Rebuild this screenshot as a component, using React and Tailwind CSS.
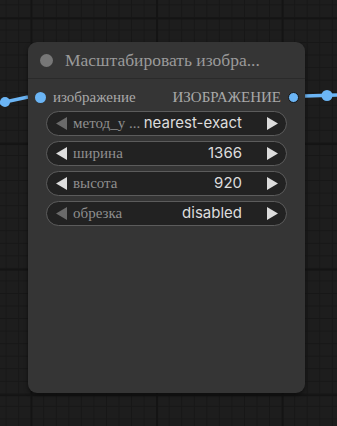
import React from 'react';

const widgets = [
  { label: 'метод_у ...', value: 'nearest-exact', dimLeft: true },
  { label: 'ширина', value: '1366', dimLeft: false },
  { label: 'высота', value: '920', dimLeft: false },
  { label: 'обрезка', value: 'disabled', dimLeft: true },
];

function Arrow({ dir, dim }) {
  const fill = dim ? '#6a6a6a' : '#dddddd';
  return (
    <svg width="11" height="13" viewBox="0 0 11 13" className="shrink-0">
      {dir === 'left' ? (
        <polygon points="11,0 11,13 0,6.5" fill={fill} />
      ) : (
        <polygon points="0,0 0,13 11,6.5" fill={fill} />
      )}
    </svg>
  );
}

function Widget({ label, value, dimLeft }) {
  return (
    <div className="flex items-center h-[25px] rounded-full border border-[#5c5c5c] bg-[#222222] pl-[9px] pr-[8px]">
      <Arrow dir="left" dim={dimLeft} />
      <span className="ml-[6px] text-[15px] text-[#8f8f8f] font-['Liberation_Serif',serif] whitespace-nowrap">{label}</span>
      <span className="ml-auto mr-[25px] text-[15px] text-[#dddddd] font-['Inter',sans-serif] whitespace-nowrap">{value}</span>
      <Arrow dir="right" />
    </div>
  );
}

export default function App() {
  return (
    <div className="relative w-[337px] h-[426px] overflow-hidden bg-[#1d1d1d] bg-[image:linear-gradient(to_right,#141414_1.5px,transparent_1.5px),linear-gradient(to_bottom,#141414_1.5px,transparent_1.5px),linear-gradient(to_right,#171717_1px,transparent_1px),linear-gradient(to_bottom,#171717_1px,transparent_1px)] bg-[size:125.6px_125.6px,125.6px_125.6px,12.56px_12.56px,12.56px_12.56px] bg-[position:30.5px_17.5px,30.5px_17.5px,5.6px_4.4px,5.6px_4.4px]">
      {/* wires */}
      <svg className="absolute inset-0" width="337" height="426">
        <path d="M0 103 L28 97" stroke="#6bb5f5" strokeWidth="3.5" fill="none" />
        <circle cx="5" cy="102" r="5" fill="#6bb5f5" />
        <path d="M305 96 L337 95" stroke="#6bb5f5" strokeWidth="3.5" fill="none" />
        <circle cx="327" cy="95.5" r="5.5" fill="#6bb5f5" />
      </svg>

      {/* node */}
      <div className="absolute left-[28px] top-[42px] w-[277px] h-[351px] rounded-[9px] bg-[#353535] shadow-[0_2px_4px_rgba(0,0,0,0.5)] flex flex-col">
        <div className="h-[37px] flex items-center border-b border-[#2a2a2a] px-[12px]">
          <div className="w-[13px] h-[13px] rounded-full bg-[#777777]" />
          <span className="ml-[12px] text-[17.5px] text-[#9a9a9a] font-['Liberation_Serif',serif] whitespace-nowrap">Масштабировать изобра...</span>
        </div>

        <div className="h-[32px] flex items-center pt-[4px] pl-[7px] pr-[6px]">
          <div className="w-[11px] h-[11px] rounded-full bg-[#6bb5f5]" />
          <span className="ml-[7px] text-[15px] text-[#a9a9a9] font-['Liberation_Serif',serif]">изображение</span>
          <span className="ml-auto mr-[7px] text-[15px] text-[#a9a9a9] font-['Liberation_Serif',serif]">ИЗОБРАЖЕНИЕ</span>
          <div className="w-[11px] h-[11px] rounded-full bg-[#6bb5f5] border-[1.5px] border-[#151515]" />
        </div>

        <div className="flex flex-col gap-[5px] px-[18px]">
          {widgets.map((w) => (
            <Widget key={w.label} {...w} />
          ))}
        </div>
      </div>
    </div>
  );
}
